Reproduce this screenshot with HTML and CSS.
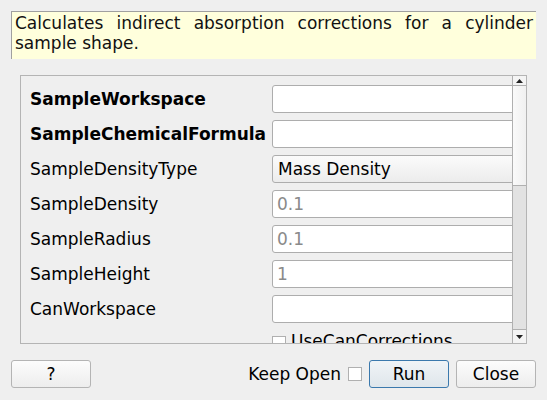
FILE: index.html
```html
<!DOCTYPE html>
<html>
<head>
<meta charset="utf-8">
<link rel="stylesheet" href="styles.css">
</head>
<body>
<div class="dialog">
  <div class="desc">Calculates indirect absorption corrections for a cylinder sample shape.</div>
  <div class="scroll-area">
    <div class="viewport">
      <div class="form">
        <div class="row"><span class="label bold">SampleWorkspace</span><div class="field input"></div></div>
        <div class="row"><span class="label bold">SampleChemicalFormula</span><div class="field input"></div></div>
        <div class="row"><span class="label">SampleDensityType</span><div class="field combo">Mass Density</div></div>
        <div class="row"><span class="label">SampleDensity</span><div class="field input placeholder">0.1</div></div>
        <div class="row"><span class="label">SampleRadius</span><div class="field input placeholder">0.1</div></div>
        <div class="row"><span class="label">SampleHeight</span><div class="field input placeholder">1</div></div>
        <div class="row"><span class="label">CanWorkspace</span><div class="field input"></div></div>
        <div class="row check-row"><span class="label"></span><span class="check"></span><span class="check-text">UseCanCorrections</span></div>
      </div>
    </div>
    <div class="scrollbar">
      <div class="arrow up"><svg width="7" height="4" viewBox="0 0 7 4"><polygon points="0,4 7,4 3.5,0" fill="#222"/></svg></div>
      <div class="thumb"></div>
      <div class="track"></div>
      <div class="arrow down"><svg width="7" height="4" viewBox="0 0 7 4"><polygon points="0,0 7,0 3.5,4" fill="#222"/></svg></div>
    </div>
  </div>
  <div class="buttons">
    <button class="btn help">?</button>
    <span class="spacer"></span>
    <span class="keep">Keep Open</span>
    <span class="check keep-check"></span>
    <button class="btn run">Run</button>
    <button class="btn close">Close</button>
  </div>
</div>
</body>
</html>
```
FILE: styles.css
```css
html, body {
  margin: 0;
  padding: 0;
  background: #efefef;
}
body {
  width: 547px;
  height: 400px;
  overflow: hidden;
  font-family: "DejaVu Sans", sans-serif;
  font-size: 17px;
  color: #000;
}
.dialog {
  display: flex;
  flex-direction: column;
}
.desc {
  margin: 11px 11px 0 11px;
  height: 46px;
  background: #ffffdc;
  border-top: 1px solid #a0a0a0;
  border-left: 1px solid #a0a0a0;
  padding: 1px 3px 0 3px;
  text-align: justify;
  line-height: 20px;
  color: #111;
}
.scroll-area {
  margin: 16px 0 0 20px;
  width: 505px;
  height: 267px;
  border: 1px solid #b4b4b4;
  display: flex;
  background: #efefef;
}
.viewport {
  width: 491px;
  height: 267px;
  overflow: hidden;
}
.form {
  padding: 9px 0 0 9px;
  display: flex;
  flex-direction: column;
  gap: 7px;
}
.row {
  display: flex;
  align-items: center;
  height: 28px;
  white-space: nowrap;
}
.label {
  width: 242px;
  flex: none;
}
.bold {
  font-weight: bold;
}
.field {
  flex: none;
  width: 260px;
  height: 26px;
  border: 1px solid #adadad;
  border-radius: 3px;
  box-sizing: content-box;
  padding: 0 0 0 4px;
  line-height: 26px;
}
.input {
  background: #fff;
}
.placeholder {
  color: #8a8a8a;
}
.combo {
  background: linear-gradient(#fbfbfb, #ececec);
  padding-left: 5px;
}
.check-row {
  align-items: flex-start;
  padding-top: 6px;
  height: 22px;
}
.check {
  display: inline-block;
  width: 12px;
  height: 12px;
  border: 1px solid #b0b0b0;
  background: #fff;
  flex: none;
}
.check-text {
  margin-left: 5px;
  line-height: 14px;
  margin-top: -2px;
}
.scrollbar {
  width: 13px;
  border-left: 1px solid #b0b0b0;
  display: flex;
  flex-direction: column;
  background: #e2e2e2;
}
.arrow {
  height: 9px;
  background: #f4f4f4;
  display: flex;
  align-items: center;
  justify-content: center;
}
.arrow.up {
  border-bottom: 1px solid #b0b0b0;
}
.arrow.down {
  height: 13px;
  border-top: 1px solid #b0b0b0;
}
.thumb {
  height: 99px;
  background: linear-gradient(90deg, #fafafa, #f0f0f0);
  border-bottom: 1px solid #b0b0b0;
}
.track {
  flex: 1;
}
.buttons {
  margin: 16px 11px 0 11px;
  display: flex;
  align-items: center;
  height: 28px;
}
.btn {
  font-family: "DejaVu Sans", sans-serif;
  font-size: 17px;
  color: #000;
  width: 80px;
  height: 28px;
  border: 1px solid #b4b4b4;
  border-radius: 3px;
  background: linear-gradient(#fcfcfc, #ededed);
  padding: 0;
  margin: 0;
}
.spacer {
  flex: 1;
}
.keep-check {
  margin-left: 7px;
}
.run {
  margin-left: 7px;
  border-color: #3b79ad;
  background: linear-gradient(#f0f4f7, #dfe6eb);
}
.close {
  margin-left: 7px;
}
```
